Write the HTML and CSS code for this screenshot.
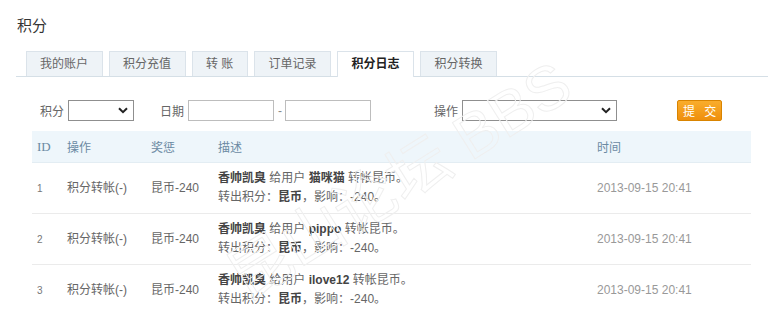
FILE: index.html
```html
<!DOCTYPE html>
<html lang="zh-CN">
<head>
    <meta charset="UTF-8">
    <title>积分</title>
    <link rel="stylesheet" href="styles.css">
</head>
<body>
    <div class="page">
        <h2 class="title">积分</h2>

        <ul class="tabs">
            <li class="tab">我的账户</li>
            <li class="tab">积分充值</li>
            <li class="tab">转 账</li>
            <li class="tab">订单记录</li>
            <li class="tab active">积分日志</li>
            <li class="tab">积分转换</li>
        </ul>

        <div class="content">
            <form class="filter">
                <label class="label">积分</label>
                <span class="select-wrap small">
                    <select class="select"><option></option></select>
                    <svg class="chevron" width="10" height="7" viewBox="0 0 10 7"><path d="M1 1.2 L5 5.2 L9 1.2" fill="none" stroke="#222" stroke-width="2"/></svg>
                </span>
                <label class="label date-label">日期</label>
                <input class="input" type="text">
                <span class="dash">-</span>
                <input class="input" type="text">
                <label class="label op-label">操作</label>
                <span class="select-wrap wide">
                    <select class="select"><option></option></select>
                    <svg class="chevron" width="10" height="7" viewBox="0 0 10 7"><path d="M1 1.2 L5 5.2 L9 1.2" fill="none" stroke="#222" stroke-width="2"/></svg>
                </span>
                <button class="submit" type="button">提 交</button>
            </form>

            <table class="log">
                <colgroup>
                    <col style="width:30px">
                    <col style="width:84px">
                    <col style="width:67px">
                    <col style="width:379px">
                    <col>
                </colgroup>
                <thead>
                    <tr>
                        <th class="id-head">ID</th>
                        <th>操作</th>
                        <th>奖惩</th>
                        <th>描述</th>
                        <th>时间</th>
                    </tr>
                </thead>
                <tbody>
                    <tr>
                        <td class="id">1</td>
                        <td>积分转帐(-)</td>
                        <td>昆币-240</td>
                        <td class="desc"><b>香帅凯臭</b> 给用户 <b>猫咪猫</b> 转帐昆币。<br>转出积分：<b>昆币</b>，影响：-240。</td>
                        <td class="time">2013-09-15 20:41</td>
                    </tr>
                    <tr>
                        <td class="id">2</td>
                        <td>积分转帐(-)</td>
                        <td>昆币-240</td>
                        <td class="desc"><b>香帅凯臭</b> 给用户 <b>pippo</b> 转帐昆币。<br>转出积分：<b>昆币</b>，影响：-240。</td>
                        <td class="time">2013-09-15 20:41</td>
                    </tr>
                    <tr>
                        <td class="id">3</td>
                        <td>积分转帐(-)</td>
                        <td>昆币-240</td>
                        <td class="desc"><b>香帅凯臭</b> 给用户 <b>ilove12</b> 转帐昆币。<br>转出积分：<b>昆币</b>，影响：-240。</td>
                        <td class="time">2013-09-15 20:41</td>
                    </tr>
                </tbody>
            </table>
        </div>

        <div class="watermark">昆山论坛 BBS</div>
    </div>
</body>
</html>
```

FILE: styles.css
```css
body {
    margin: 0;
    background: #fff;
    font-family: "Liberation Sans", "Noto Sans CJK SC", sans-serif;
    font-size: 12px;
    color: #666;
}
.page {
    position: relative;
    padding: 16px 12px 0 16px;
    overflow: hidden;
}
.title {
    margin: 0;
    font-size: 15px;
    line-height: 20px;
    font-weight: normal;
    color: #333;
    padding-left: 1px;
}
.tabs {
    display: flex;
    gap: 6px;
    list-style: none;
    margin: 15px 0 0;
    padding: 0 0 0 10px;
    border-bottom: 1px solid #d5dfe6;
}
.tab {
    height: 24px;
    line-height: 24px;
    padding: 0 14px 0 13px;
    background: #eef3f7;
    border: 1px solid #dbe3ea;
    border-bottom: none;
    color: #666;
}
.tab.active {
    background: #fff;
    color: #222;
    font-weight: bold;
    height: 25px;
    margin-bottom: -1px;
}
.content {
    padding: 23px 17px 0 16px;
}
.filter {
    display: flex;
    align-items: center;
    height: 21px;
    padding-left: 8px;
    margin: 0 0 10px;
}
.label {
    color: #666;
    margin-right: 4px;
}
.date-label {
    margin-left: 26px;
}
.op-label {
    margin-left: 63px;
}
.select-wrap {
    position: relative;
    display: inline-block;
    height: 21px;
}
.select-wrap.small {
    width: 66px;
}
.select-wrap.wide {
    width: 155px;
}
.select {
    appearance: none;
    width: 100%;
    height: 21px;
    margin: 0;
    border: 1px solid #8f8f8f;
    border-radius: 0;
    background: #fff;
}
.chevron {
    position: absolute;
    right: 6px;
    top: 7px;
    pointer-events: none;
}
.input {
    width: 86px;
    height: 21px;
    box-sizing: border-box;
    margin: 0;
    padding: 0 3px;
    border: 1px solid #bdbdbd;
    border-radius: 0;
}
.dash {
    margin: 0 3px 0 4px;
    color: #888;
}
.submit {
    margin-left: 60px;
    width: 45px;
    height: 21px;
    padding: 0;
    border: 1px solid #d98400;
    border-radius: 2px;
    background: linear-gradient(#f9ad2c, #ef8f0d);
    color: #fff;
    font-family: inherit;
    font-size: 12px;
    letter-spacing: 3px;
    text-indent: 3px;
    cursor: pointer;
}
.log {
    width: 719px;
    table-layout: fixed;
    border-collapse: collapse;
}
.log th {
    height: 31px;
    padding: 0 5px;
    background: #eef6fb;
    border-bottom: 1px solid #e3edf3;
    text-align: left;
    font-weight: normal;
    color: #6b8aa3;
}
.log .id-head {
    font-family: "Liberation Serif", serif;
    font-size: 13px;
}
.log td {
    padding: 6px 5px;
    line-height: 19px;
    border-bottom: 1px solid #ebebeb;
    color: #666;
    vertical-align: middle;
}
.log td.id {
    font-size: 10px;
    color: #777;
}
.log td.desc b {
    color: #444;
}
.log td.time {
    color: #999;
}
.watermark {
    position: absolute;
    left: 205px;
    top: 150px;
    font-size: 62px;
    line-height: 62px;
    color: transparent;
    -webkit-text-stroke: 1px #efefef;
    transform: rotate(-32deg);
    white-space: nowrap;
    pointer-events: none;
}
```
